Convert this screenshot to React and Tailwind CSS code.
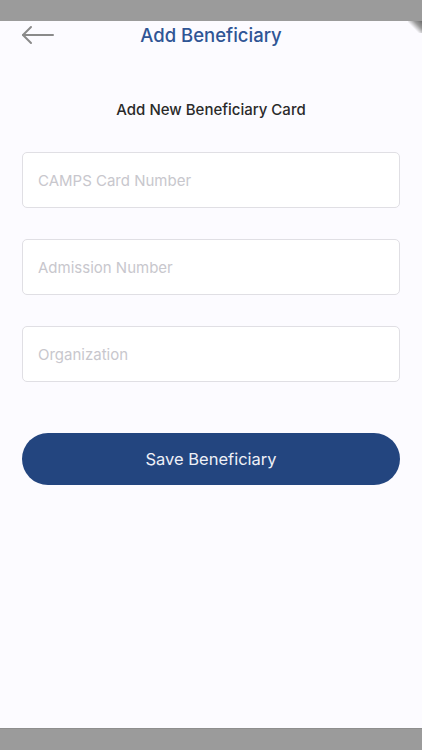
export default function App() {
  const fields = ["CAMPS Card Number", "Admission Number", "Organization"];
  return (
    <div className="w-[422px] h-[750px] bg-[#9b9b9b] flex flex-col overflow-hidden" style={{ fontFamily: "Inter, 'Noto Sans', sans-serif" }}>
      <div className="h-[21px] shrink-0" />
      <div className="relative flex-1 bg-[#fcfbff] flex flex-col">
        <div className="absolute right-0 top-0 w-[14px] h-[12px] bg-[linear-gradient(225deg,#6b6b6b_0%,#9a9a9a_30%,rgba(252,251,255,0)_60%)]" />
        <div className="h-[28px] relative flex items-center justify-center">
          <svg className="absolute left-[21px] top-[4px]" width="34" height="20" viewBox="0 0 34 20" fill="none" stroke="#8a8a8a" strokeWidth="2" strokeLinecap="round" strokeLinejoin="round">
            <path d="M2 10H32" />
            <path d="M10 2L2 10L10 18" />
          </svg>
          <span className="text-[18.5px] font-medium text-[#2f5595] leading-none">Add Beneficiary</span>
        </div>
        <div className="mt-[53px] text-center text-[15px] font-medium text-[#2a2a2a] leading-none">Add New Beneficiary Card</div>
        <div className="mt-[35px] px-[22px] flex flex-col gap-[31px]">
          {fields.map((f) => (
            <div key={f} className="h-[56px] bg-white border border-[#e0dfe4] rounded-[5px] flex items-center pl-[15px] pt-[3px]">
              <span className="text-[15px] text-[#c8c7cd]">{f}</span>
            </div>
          ))}
        </div>
        <div className="mt-[51px] px-[22px]">
          <div className="h-[52px] rounded-full bg-[#23457f] flex items-center justify-center">
            <span className="text-[16.5px] text-[#eef0f7]">Save Beneficiary</span>
          </div>
        </div>
        <div className="flex-1" />
      </div>
      <div className="h-[22px] shrink-0 border-t border-[#8e8e8e]" />
    </div>
  );
}
